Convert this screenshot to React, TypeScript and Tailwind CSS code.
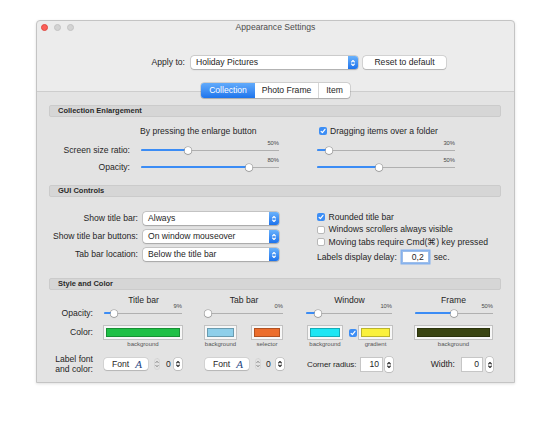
import React from 'react';

function Chevrons({ className = '' }: { className?: string }) {
  return (
    <svg viewBox="0 0 6 10" className={className} fill="none" stroke="currentColor" strokeWidth={1.1} strokeLinecap="round" strokeLinejoin="round">
      <path d="M1.6 4 3 2.5 4.4 4" />
      <path d="M1.6 6 3 7.5 4.4 6" />
    </svg>
  );
}

function Popup({ value }: { value: string }) {
  return (
    <div className="flex h-[13px] w-full items-stretch rounded-[3px] bg-white shadow-[0_0_0_0.5px_rgba(0,0,0,0.22),0_0.5px_1.5px_rgba(0,0,0,0.18)]">
      <span className="flex-1 truncate pl-[5px] leading-[13px]">{value}</span>
      <span className="flex w-[10px] items-center justify-center rounded-r-[3px] bg-linear-to-b from-[#6ab2fb] to-[#1b72ec] text-white">
        <Chevrons className="h-[10px] w-[6px]" />
      </span>
    </div>
  );
}

function Slider({ value, pct, className = '' }: { value: string; pct: number; className?: string }) {
  return (
    <div className={`flex flex-col ${className}`}>
      <div className="h-[6px] text-right text-[5.8px] leading-[6px] text-[#4a4a4a]">{value}</div>
      <div className="relative h-[8px]">
        <div className="absolute inset-x-0 top-[3.5px] h-[1px] bg-[#b0b0b0]" />
        <div className="absolute left-0 top-[3px] h-[2px] rounded-full bg-[#3b8cf5]" style={{ width: `${pct}%` }} />
        <div
          className="absolute top-[0.5px] h-[7px] w-[7px] -translate-x-1/2 rounded-full bg-white shadow-[0_0_0_0.5px_rgba(0,0,0,0.3),0_0.5px_1px_rgba(0,0,0,0.35)]"
          style={{ left: `${pct}%` }}
        />
      </div>
    </div>
  );
}

function Check({ on = false }: { on?: boolean }) {
  if (on) {
    return (
      <span className="flex h-[8px] w-[8px] shrink-0 items-center justify-center rounded-[2px] bg-[#3d8ef5]">
        <svg viewBox="0 0 8 8" className="h-[8px] w-[8px]" fill="none" stroke="white" strokeWidth={1.2} strokeLinecap="round" strokeLinejoin="round">
          <path d="M2.1 4.3 3.4 5.6 6 2.3" />
        </svg>
      </span>
    );
  }
  return <span className="h-[8px] w-[8px] shrink-0 rounded-[2px] border border-[#b8b8b8] bg-white" />;
}

function Header({ children }: { children: React.ReactNode }) {
  return (
    <div className="h-[12px] rounded-[2px] border border-[#cbcbcb] bg-[#d6d6d6] pl-[8px] text-[7.5px] font-bold leading-[10px] text-[#2a2a2a]">
      {children}
    </div>
  );
}

function Swatch({ fill, label, className = '' }: { fill: string; label: string; className?: string }) {
  return (
    <div className={`flex flex-col ${className}`}>
      <div className="h-[15px] border border-[#c2c2c2] bg-[#f7f7f7] p-[2px]">
        <div className={`h-full border border-black/25 ${fill}`} />
      </div>
      <div className="mt-[1px] h-[6px] text-center text-[6px] leading-[6px] text-[#555]">{label}</div>
    </div>
  );
}

function FontButton({ className = '' }: { className?: string }) {
  return (
    <div className={`flex h-[12px] w-[44px] items-center justify-between rounded-[3px] bg-white pl-[8px] pr-[6px] shadow-[0_0_0_0.5px_rgba(0,0,0,0.12),0_0.5px_1px_rgba(0,0,0,0.15)] ${className}`}>
      <span className="leading-[12px]">Font</span>
      <span className="font-['Liberation_Serif',serif] text-[11px] italic leading-[12px] text-[#24457f]">A</span>
    </div>
  );
}

function GhostStepper({ className = '' }: { className?: string }) {
  return (
    <svg viewBox="0 0 6 12" className={`h-[12px] w-[6px] ${className}`} fill="none" strokeLinecap="round" strokeLinejoin="round">
      <rect x="0.5" y="0.5" width="5" height="11" rx="2.5" stroke="#cfcfcf" strokeWidth={0.6} />
      <path d="M1.8 4.6 3 3.3 4.2 4.6" stroke="#777" strokeWidth={0.9} />
      <path d="M1.8 7.4 3 8.7 4.2 7.4" stroke="#777" strokeWidth={0.9} />
    </svg>
  );
}

function Stepper({ className = '' }: { className?: string }) {
  return (
    <span className={`flex items-center justify-center rounded-[2.5px] bg-white text-[#333] shadow-[0_0_0_0.5px_rgba(0,0,0,0.2),0_0.5px_1px_rgba(0,0,0,0.15)] ${className}`}>
      <Chevrons className="h-[10px] w-[6px]" />
    </span>
  );
}

function Field({ value, className = '' }: { value: string; className?: string }) {
  return (
    <span className={`h-[15px] border border-[#c6c6c6] bg-white pr-[3px] text-right leading-[13px] ${className}`}>{value}</span>
  );
}

export default function App() {
  return (
    <div className="h-[434px] w-[550px] bg-white pl-[36px] pt-[20px] font-['Liberation_Sans',Arial,sans-serif] text-[8.6px] text-[#262626]">
      <div className="flex h-[363px] w-[479px] flex-col overflow-hidden rounded-t-[4px] border border-[#c4c4c4] bg-[#ececec] shadow-[0_1px_3px_rgba(0,0,0,0.12)]">
        {/* title bar */}
        <div className="grid h-[13px] grid-cols-[1fr_auto_1fr] items-center">
          <div className="flex gap-[5.5px] pl-[3.5px]">
            <span className="h-[7.5px] w-[7.5px] rounded-full border-[0.5px] border-[#de4a43] bg-[#fc5f58]" />
            <span className="h-[7.5px] w-[7.5px] rounded-full border-[0.5px] border-[#c2c2c2] bg-[#d3d3d3]" />
            <span className="h-[7.5px] w-[7.5px] rounded-full border-[0.5px] border-[#c2c2c2] bg-[#d3d3d3]" />
          </div>
          <div className="leading-[13px] text-[#4d4d4d]">Appearance Settings</div>
          <div />
        </div>

        {/* apply row */}
        <div className="mt-[22px] flex h-[13px] items-center pl-[63px]">
          <span className="w-[85px] text-right">Apply to:</span>
          <div className="ml-[6px] w-[167px]">
            <Popup value="Holiday Pictures" />
          </div>
          <button className="ml-[5px] h-[13px] w-[83px] rounded-[3px] bg-white text-center leading-[13px] shadow-[0_0_0_0.5px_rgba(0,0,0,0.2),0_0.5px_1px_rgba(0,0,0,0.15)]">
            Reset to default
          </button>
        </div>

        {/* tabs */}
        <div className="relative z-10 mt-[14px] -mb-[7px] flex justify-center">
          <div className="flex h-[15px] rounded-[3px] bg-white shadow-[0_0_0_0.5px_rgba(0,0,0,0.22),0_0.5px_1px_rgba(0,0,0,0.15)]">
            <span className="w-[54px] rounded-l-[3px] bg-linear-to-b from-[#62abfb] to-[#1c74ec] text-center leading-[15px] text-white">Collection</span>
            <span className="w-[63px] text-center leading-[15px]">Photo Frame</span>
            <span className="w-[32px] border-l border-[#d6d6d6] text-center leading-[15px]">Item</span>
          </div>
        </div>

        {/* content */}
        <div className="flex-1 border-t border-[#cdcdcd] bg-[#e3e3e3] pl-[12px] pr-[13px] pt-[13px]">
          <Header>Collection Enlargement</Header>
          <div className="mt-[8px] flex h-[13px] items-center">
            <div className="w-[230px] pl-[91px]">By pressing the enlarge button</div>
            <div className="ml-[38px] flex items-center gap-[3px] pl-[2px]">
              <Check on />
              Dragging items over a folder
            </div>
          </div>
          <div className="mt-[2px] flex items-end">
            <div className="flex w-[230px] items-end">
              <span className="w-[81px] text-right leading-[8px]">Screen size ratio:</span>
              <Slider value="50%" pct={34} className="ml-[11px] w-[138px]" />
            </div>
            <Slider value="30%" pct={9} className="ml-[38px] w-[138px]" />
          </div>
          <div className="mt-[3px] flex items-end">
            <div className="flex w-[230px] items-end">
              <span className="w-[81px] text-right leading-[8px]">Opacity:</span>
              <Slider value="80%" pct={78} className="ml-[11px] w-[138px]" />
            </div>
            <Slider value="50%" pct={45} className="ml-[38px] w-[138px]" />
          </div>

          <div className="mt-[14px]">
            <Header>GUI Controls</Header>
          </div>
          <div className="flex">
            <div className="flex w-[230px] flex-col gap-[5px] pt-[15px]">
              {[
                ['Show title bar:', 'Always'],
                ['Show title bar buttons:', 'On window mouseover'],
                ['Tab bar location:', 'Below the title bar'],
              ].map(([label, value]) => (
                <div key={label} className="flex h-[13px] items-center">
                  <span className="w-[89px] whitespace-nowrap text-right">{label}</span>
                  <div className="ml-[5px] w-[136px]">
                    <Popup value={value} />
                  </div>
                </div>
              ))}
            </div>
            <div className="ml-[38px] flex flex-col pt-[14px]">
              <div className="flex h-[12.5px] items-center gap-[3.5px]">
                <Check on />
                Rounded title bar
              </div>
              <div className="flex h-[12.5px] items-center gap-[3.5px]">
                <Check />
                Windows scrollers always visible
              </div>
              <div className="flex h-[12.5px] items-center gap-[3.5px]">
                <Check />
                Moving tabs require Cmd(⌘) key pressed
              </div>
              <div className="mt-[2.5px] flex h-[12px] items-center">
                <span>Labels display delay:</span>
                <span className="ml-[5px] h-[12px] w-[27px] border border-[#9dbde9] bg-white pr-[4px] text-right leading-[10px] shadow-[0_0_0_1.5px_#86b2ee]">
                  0,2
                </span>
                <span className="ml-[5px]">sec.</span>
              </div>
            </div>
          </div>

          <div className="mt-[15px]">
            <Header>Style and Color</Header>
          </div>
          {/* headings */}
          <div className="mt-[5px] flex h-[10px] items-center leading-[10px]">
            <div className="w-[44px] shrink-0" />
            <div className="ml-[11px] w-[79px] shrink-0 text-center">Title bar</div>
            <div className="ml-[21px] w-[80px] shrink-0 text-center">Tab bar</div>
            <div className="ml-[22px] w-[87px] shrink-0 text-center">Window</div>
            <div className="ml-[21px] w-[79px] shrink-0 text-center">Frame</div>
          </div>
          {/* opacity */}
          <div className="-mt-[2px] flex items-end">
            <div className="w-[44px] shrink-0 text-right leading-[8px]">Opacity:</div>
            <div className="ml-[11px] w-[79px] shrink-0">
              <Slider value="9%" pct={13} className="w-[78px]" />
            </div>
            <div className="ml-[21px] w-[80px] shrink-0">
              <Slider value="0%" pct={4} className="ml-[1px] w-[78px]" />
            </div>
            <div className="ml-[22px] w-[87px] shrink-0">
              <Slider value="10%" pct={14} className="w-[86px]" />
            </div>
            <div className="ml-[21px] w-[79px] shrink-0">
              <Slider value="50%" pct={50} className="ml-[1px] w-[78px]" />
            </div>
          </div>
          {/* color */}
          <div className="mt-[8px] flex items-start">
            <div className="w-[44px] shrink-0 text-right leading-[15px]">Color:</div>
            <div className="ml-[11px] w-[79px] shrink-0">
              <Swatch fill="bg-[#1fc046]" label="background" className="-ml-[1px] w-[80px]" />
            </div>
            <div className="ml-[21px] flex w-[80px] shrink-0">
              <Swatch fill="bg-[#8ecfea]" label="background" className="w-[33px]" />
              <Swatch fill="bg-[#ec6d2c]" label="selector" className="ml-[14px] w-[32px]" />
            </div>
            <div className="ml-[22px] flex w-[87px] shrink-0">
              <Swatch fill="bg-[#1de6f4]" label="background" className="ml-[1px] w-[36px]" />
              <div className="ml-[6px] flex h-[15px] items-center">
                <Check on />
              </div>
              <Swatch fill="bg-[#faf13c]" label="gradient" className="ml-[1px] w-[35px]" />
            </div>
            <div className="ml-[21px] w-[79px] shrink-0">
              <Swatch fill="bg-[#3a4512]" label="background" className="w-[79px]" />
            </div>
          </div>
          {/* font row */}
          <div className="mt-[10px] flex h-[15px] items-center">
            <div className="w-[44px] shrink-0 text-right leading-[9.5px]">
              Label font
              <br />
              and color:
            </div>
            <div className="ml-[11px] flex w-[79px] shrink-0 items-center">
              <FontButton />
              <GhostStepper className="ml-[6px]" />
              <span className="ml-[6px]">0</span>
              <Stepper className="ml-[3px] h-[12px] w-[8px]" />
            </div>
            <div className="ml-[21px] flex w-[80px] shrink-0 items-center">
              <FontButton className="ml-[1px]" />
              <GhostStepper className="ml-[6px]" />
              <span className="ml-[5px]">0</span>
              <Stepper className="ml-[5px] h-[12px] w-[8px]" />
            </div>
            <div className="ml-[22px] flex w-[87px] shrink-0 items-center">
              <span className="ml-[1px] whitespace-nowrap text-[8px] tracking-[-0.1px]">Corner radius:</span>
              <div className="ml-auto flex items-center">
                <Field value="10" className="w-[23px]" />
                <Stepper className="ml-[2px] h-[15px] w-[8px]" />
              </div>
            </div>
            <div className="ml-[21px] flex w-[79px] shrink-0 items-center">
              <div className="ml-auto flex items-center">
                <span className="whitespace-nowrap">Width:</span>
                <Field value="0" className="ml-[6px] w-[22px]" />
                <Stepper className="ml-[3px] h-[15px] w-[7px]" />
              </div>
            </div>
          </div>
        </div>
      </div>
    </div>
  );
}
